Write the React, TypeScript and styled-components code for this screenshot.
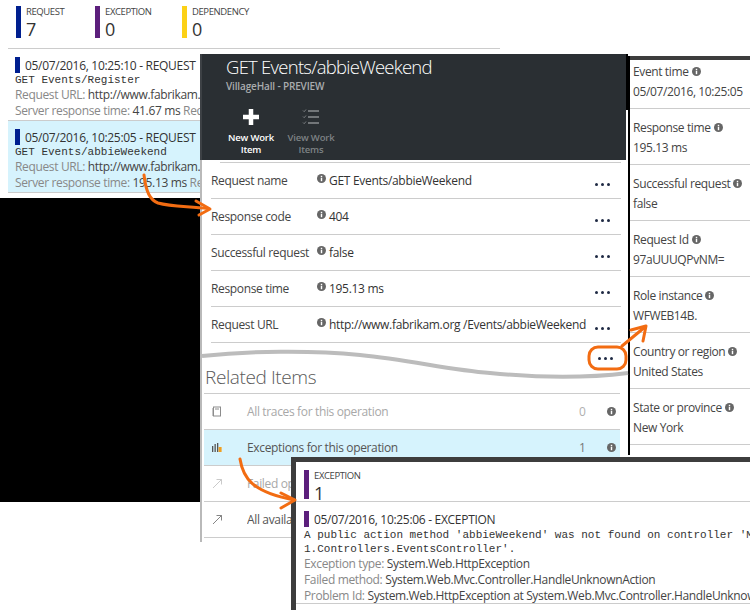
import React from "react";
import styled, { createGlobalStyle } from "styled-components";

const Global = createGlobalStyle`
  html, body { margin: 0; padding: 0; background: #fff; }
  body { font-family: "Open Sans", "Noto Sans", sans-serif; color: #333; }
  #root { width: 750px; height: 610px; overflow: hidden; }
`;

const Canvas = styled.div`
  position: relative;
  width: 750px;
  height: 610px;
  overflow: hidden;
  background: #fff;
  font-size: 12px;
  letter-spacing: -0.35px;
`;

const BlackBlock = styled.div`
  position: absolute;
  left: 0;
  top: 198px;
  width: 202px;
  height: 304px;
  background: #000;
`;

const ListWindow = styled.section`
  position: absolute;
  left: 0;
  top: 0;
  width: 500px;
  height: 198px;
  padding-left: 8px;
  box-sizing: border-box;
  background: #fff;
`;

const Tiles = styled.div`
  display: flex;
  height: 49px;
  padding: 6px 0 0 8px;
  box-sizing: border-box;
  border-bottom: 1px solid #ccc;
`;

const Tile = styled.div<{ $w: number }>`
  display: flex;
  width: ${(p) => p.$w}px;
  gap: 5px;
`;

const TileBar = styled.div<{ $c: string; $h?: number }>`
  width: 5px;
  height: ${(p) => p.$h ?? 32}px;
  background: ${(p) => p.$c};
`;

const TileText = styled.div`
  display: flex;
  flex-direction: column;
`;

const TileLabel = styled.div`
  font-size: 9.5px;
  line-height: 12px;
  letter-spacing: -0.4px;
  color: #444;
`;

const TileValue = styled.div`
  font-size: 18px;
  line-height: 22px;
  letter-spacing: 0;
  color: #333;
`;

const ResultRow = styled.div<{ $selected?: boolean }>`
  width: 192px;
  height: 72px;
  padding: 8px 0 0 7px;
  box-sizing: border-box;
  overflow: hidden;
  background: ${(p) => (p.$selected ? "#d6f3fd" : "#fff")};
  border-bottom: 1px solid #ccc;
`;

const ResultTitle = styled.div`
  display: flex;
  align-items: center;
  gap: 5px;
  height: 16px;
  font-size: 12px;
  letter-spacing: -0.3px;
  white-space: nowrap;
  color: #333;
`;

const Bar = styled.div<{ $c: string }>`
  flex: none;
  width: 5px;
  height: 16px;
  background: ${(p) => p.$c};
`;

const Mono = styled.div`
  font-family: "Liberation Mono", "DejaVu Sans Mono", monospace;
  font-size: 11px;
  line-height: 14px;
  letter-spacing: 0;
  white-space: nowrap;
  color: #333;
`;

const ExMono = styled(Mono)`
  position: relative;
  top: 1px;
`;

const MetaLine = styled.div`
  height: 16px;
  line-height: 16px;
  font-size: 12px;
  white-space: nowrap;
  color: #888;
  & b {
    font-weight: 400;
    color: #444;
  }
`;

const DetailWindow = styled.section`
  position: absolute;
  left: 200px;
  top: 54px;
  width: 426px;
  height: 488px;
  background: #fff;
`;

const DarkHeader = styled.header`
  height: 106px;
  box-sizing: border-box;
  background: #2a2f33;
  border-left: 2px solid #3d4145;
  padding-left: 24px;
  color: #fff;
`;

const HeaderTitle = styled.div`
  font-size: 18.5px;
  line-height: 26px;
  font-weight: 300;
  letter-spacing: -0.75px;
  white-space: nowrap;
`;

const HeaderSub = styled.div`
  font-size: 10px;
  line-height: 13px;
  font-weight: 600;
  letter-spacing: -0.15px;
  color: #a9acae;
`;

const Commands = styled.div`
  display: flex;
  margin-left: -5px;
  padding-top: 15px;
`;

const Command = styled.div<{ $off?: boolean }>`
  display: flex;
  flex-direction: column;
  align-items: center;
  width: 60px;
  font-size: 9.5px;
  line-height: 12px;
  font-weight: 600;
  letter-spacing: -0.2px;
  text-align: center;
  color: ${(p) => (p.$off ? "#7e8285" : "#fff")};
`;

const CommandIcon = styled.div`
  height: 24px;
`;

const DetailBody = styled.div`
  height: 382px;
  border-left: 2px solid #b9b9b9;
  padding: 2px 0 0 9px;
  box-sizing: border-box;
  display: flex;
  flex-direction: column;
`;

const PropRow = styled.div`
  flex: none;
  display: flex;
  align-items: center;
  height: 36px;
  width: 410px;
  box-sizing: border-box;
  border-bottom: 1px solid #ccc;
  font-size: 12px;
  color: #444;
`;

const PropTop = styled.div`
  flex: none;
  height: 0;
  margin-left: 9px;
  width: 401px;
  border-top: 1px solid #ccc;
`;

const PropName = styled.div`
  width: 106px;
  white-space: nowrap;
`;

const PropInfo = styled.div`
  display: flex;
  margin-top: -5px;
`;

const PropValue = styled.div`
  flex: 1;
  margin-left: 3px;
  white-space: nowrap;
  letter-spacing: -0.3px;
  color: #333;
`;

const Dots = styled.div`
  display: flex;
  gap: 3px;
  margin: 8px 11px 0 0;
`;

const Dot = styled.span`
  width: 3px;
  height: 3px;
  border-radius: 50%;
  background: #1f2a44;
`;

const Gap = styled.div`
  flex: none;
  height: 22px;
`;

const RelatedHeading = styled.div`
  flex: none;
  height: 19px;
  margin-left: -6px;
  font-size: 19px;
  line-height: 24px;
  font-weight: 300;
  letter-spacing: -0.4px;
  color: #5a5a5a;
  white-space: nowrap;
`;

const RelatedList = styled.div`
  flex: none;
  margin: 9px 0 0 -7px;
  width: 416px;
  border-top: 1px solid #ccc;
`;

const RelatedRow = styled.div<{ $selected?: boolean; $muted?: boolean }>`
  display: flex;
  align-items: center;
  height: 36px;
  box-sizing: border-box;
  border-bottom: 1px solid #ccc;
  background: ${(p) => (p.$selected ? "#d6f3fd" : "#fff")};
  color: ${(p) => (p.$muted ? "#a8a8a8" : "#555")};
  font-size: 12px;
`;

const RelatedIcon = styled.div`
  width: 43px;
  padding-left: 8px;
  box-sizing: border-box;
  display: flex;
`;

const RelatedName = styled.div`
  flex: 1;
  white-space: nowrap;
`;

const ClippedName = styled.div`
  width: 44px;
  overflow: hidden;
  white-space: nowrap;
`;

const Count = styled.div<{ $muted?: boolean }>`
  width: 28px;
  color: ${(p) => (p.$muted ? "#b0b0b0" : "#777")};
`;

const EndInfo = styled.div`
  width: 13px;
  display: flex;
`;

const SideWindow = styled.aside`
  position: absolute;
  left: 628px;
  top: 56px;
  width: 122px;
  height: 399px;
  box-sizing: border-box;
  background: #fff;
  border-left: 2px solid #000;
  &::before {
    content: "";
    position: absolute;
    left: -4px;
    top: -2px;
    width: 2px;
    height: 56px;
    background: #000;
  }
`;

const SideInner = styled.div`
  border-top: 4px solid #3d3d3d;
  height: 100%;
  box-sizing: border-box;
`;

const SideRow = styled.div`
  height: 56px;
  padding: 8px 0 0 3px;
  box-sizing: border-box;
  border-bottom: 1px solid #ccc;
  &:first-child {
    height: 49px;
    padding-top: 1px;
  }
`;

const SideLabel = styled.div`
  display: flex;
  align-items: center;
  gap: 3px;
  height: 21px;
  font-size: 12px;
  letter-spacing: -0.38px;
  color: #444;
  white-space: nowrap;
`;

const SideValue = styled.div`
  height: 20px;
  line-height: 20px;
  font-size: 12px;
  letter-spacing: -0.38px;
  color: #444;
  white-space: nowrap;
`;

const ExceptionWindow = styled.section`
  position: absolute;
  left: 291px;
  top: 457px;
  width: 459px;
  height: 153px;
  box-sizing: border-box;
  background: #fff;
  border-left: 5px solid #3d3d3d;
  border-top: 5px solid #3d3d3d;
  overflow: hidden;
`;

const ExTile = styled.div`
  display: flex;
  gap: 5px;
  height: 40px;
  padding: 8px 0 0 8px;
  box-sizing: border-box;
  border-bottom: 1px solid #ccc;
`;

const ExBody = styled.div`
  padding: 9px 0 0 8px;
  height: 102px;
  box-sizing: border-box;
  border-bottom: 1px solid #ccc;
`;

const ExMeta = styled(MetaLine)`
  position: relative;
  top: 1px;
`;

const Overlay = styled.svg`
  position: absolute;
  left: 0;
  top: 0;
  pointer-events: none;
`;

const Info = ({ c = "#666", s = 9 }: { c?: string; s?: number }) => (
  <svg width={s} height={s} viewBox="0 0 10 10" style={{ flex: "none" }}>
    <circle cx="5" cy="5" r="5" fill={c} />
    <rect x="4.2" y="4.2" width="1.6" height="3.8" fill="#fff" />
    <rect x="4.2" y="2" width="1.6" height="1.5" fill="#fff" />
  </svg>
);

const PlusIcon = () => (
  <svg width="18" height="18" viewBox="0 0 18 18">
    <path d="M9 1v16M1 9h16" stroke="#fff" strokeWidth="4.5" />
  </svg>
);

const ChecklistIcon = () => (
  <svg width="18" height="18" viewBox="0 0 18 18" fill="none" stroke="#8a8e91">
    <path d="M6 3h11M6 9h11M6 15h11" strokeWidth="1.6" />
    <path d="M1 2.5l1.2 1.2L4 1.5M1 8.5l1.2 1.2L4 7.5M1 14.5l1.2 1.2L4 13.5" strokeWidth="0.8" />
  </svg>
);

const TraceIcon = () => (
  <svg width="10" height="11" viewBox="0 0 10 11" fill="none" stroke="#8c8c8c" strokeWidth="1">
    <rect x="1.5" y="1" width="7" height="9" />
    <path d="M3 3h4M0 3h1M0 5h1M0 7h1M0 9h1" />
  </svg>
);

const BarsIcon = () => (
  <svg width="10" height="9" viewBox="0 0 10 9">
    <rect x="0" y="3" width="1.3" height="6" fill="#555" />
    <rect x="2.5" y="1" width="1.3" height="8" fill="#555" />
    <rect x="5" y="0" width="1.3" height="9" fill="#555" />
    <rect x="6.6" y="4" width="3" height="5" fill="#f0a020" />
  </svg>
);

const ArrowIcon = ({ c }: { c: string }) => (
  <svg width="11" height="11" viewBox="0 0 11 11" fill="none" stroke={c} strokeWidth="0.9">
    <path d="M1 10L9.5 1.5M4.5 1.5h5v5" />
  </svg>
);

const DotsRow = () => (
  <Dots>
    <Dot />
    <Dot />
    <Dot />
  </Dots>
);

const props = [
  ["Request name", "GET Events/abbieWeekend"],
  ["Response code", "404"],
  ["Successful request", "false"],
  ["Response time", "195.13 ms"],
  ["Request URL", "http://www.fabrikam.org /Events/abbieWeekend"],
];

const side = [
  ["Event time", "05/07/2016, 10:25:05"],
  ["Response time", "195.13 ms"],
  ["Successful request", "false"],
  ["Request Id", "97aUUUQPvNM="],
  ["Role instance", "WFWEB14B."],
  ["Country or region", "United States"],
  ["State or province", "New York"],
];

export default function App() {
  return (
    <Canvas>
      <Global />
      <BlackBlock />
      <ListWindow>
        <Tiles>
          <Tile $w={79}>
            <TileBar $c="#001f8f" />
            <TileText>
              <TileLabel>REQUEST</TileLabel>
              <TileValue>7</TileValue>
            </TileText>
          </Tile>
          <Tile $w={87}>
            <TileBar $c="#5c1f7c" />
            <TileText>
              <TileLabel>EXCEPTION</TileLabel>
              <TileValue>0</TileValue>
            </TileText>
          </Tile>
          <Tile $w={100}>
            <TileBar $c="#fcd116" />
            <TileText>
              <TileLabel>DEPENDENCY</TileLabel>
              <TileValue>0</TileValue>
            </TileText>
          </Tile>
        </Tiles>
        <ResultRow>
          <ResultTitle>
            <Bar $c="#001f8f" />
            05/07/2016, 10:25:10 - REQUEST
          </ResultTitle>
          <Mono>GET Events/Register</Mono>
          <MetaLine>
            Request URL: <b>http://www.fabrikam.org/Events/Register</b>
          </MetaLine>
          <MetaLine>
            Server response time: <b>41.67 ms</b> Request size
          </MetaLine>
        </ResultRow>
        <ResultRow $selected>
          <ResultTitle>
            <Bar $c="#001f8f" />
            05/07/2016, 10:25:05 - REQUEST
          </ResultTitle>
          <Mono>GET Events/abbieWeekend</Mono>
          <MetaLine>
            Request URL: <b>http://www.fabrikam.org/Events/abbieWeekend</b>
          </MetaLine>
          <MetaLine>
            Server response time: <b>195.13 ms</b> Request size
          </MetaLine>
        </ResultRow>
      </ListWindow>

      <DetailWindow>
        <DarkHeader>
          <HeaderTitle>GET Events/abbieWeekend</HeaderTitle>
          <HeaderSub>VillageHall - PREVIEW</HeaderSub>
          <Commands>
            <Command>
              <CommandIcon>
                <PlusIcon />
              </CommandIcon>
              <span>
                New Work
                <br />
                Item
              </span>
            </Command>
            <Command $off>
              <CommandIcon>
                <ChecklistIcon />
              </CommandIcon>
              <span>
                View Work
                <br />
                Items
              </span>
            </Command>
          </Commands>
        </DarkHeader>
        <DetailBody>
          <PropTop />
          {props.map(([name, value]) => (
            <PropRow key={name}>
              <PropName>{name}</PropName>
              <PropInfo>
                <Info />
              </PropInfo>
              <PropValue>{value}</PropValue>
              <DotsRow />
            </PropRow>
          ))}
          <Gap />
          <RelatedHeading>Related Items</RelatedHeading>
          <RelatedList>
            <RelatedRow $muted>
              <RelatedIcon>
                <TraceIcon />
              </RelatedIcon>
              <RelatedName>All traces for this operation</RelatedName>
              <Count $muted>0</Count>
              <EndInfo>
                <Info />
              </EndInfo>
            </RelatedRow>
            <RelatedRow $selected>
              <RelatedIcon>
                <BarsIcon />
              </RelatedIcon>
              <RelatedName>Exceptions for this operation</RelatedName>
              <Count>1</Count>
              <EndInfo>
                <Info />
              </EndInfo>
            </RelatedRow>
            <RelatedRow $muted>
              <RelatedIcon>
                <ArrowIcon c="#c4c4c4" />
              </RelatedIcon>
              <ClippedName>Failed operations</ClippedName>
            </RelatedRow>
            <RelatedRow>
              <RelatedIcon>
                <ArrowIcon c="#777" />
              </RelatedIcon>
              <ClippedName>All available telemetry</ClippedName>
            </RelatedRow>
          </RelatedList>
        </DetailBody>
      </DetailWindow>

      <SideWindow>
        <SideInner>
          {side.map(([name, value]) => (
            <SideRow key={name}>
              <SideLabel>
                {name}
                <Info />
              </SideLabel>
              <SideValue>{value}</SideValue>
            </SideRow>
          ))}
        </SideInner>
      </SideWindow>

      <ExceptionWindow>
        <ExTile>
          <TileBar $c="#5c1f7c" $h={29} />
          <TileText>
            <TileLabel>EXCEPTION</TileLabel>
            <TileValue>1</TileValue>
          </TileText>
        </ExTile>
        <ExBody>
          <ResultTitle>
            <Bar $c="#5c1f7c" />
            05/07/2016, 10:25:06 - EXCEPTION
          </ResultTitle>
          <ExMono>A public action method 'abbieWeekend' was not found on controller 'Microsoft.Fabrika</ExMono>
          <ExMono>1.Controllers.EventsController'.</ExMono>
          <ExMeta>
            Exception type: <b>System.Web.HttpException</b>
          </ExMeta>
          <ExMeta>
            Failed method: <b>System.Web.Mvc.Controller.HandleUnknownAction</b>
          </ExMeta>
          <ExMeta>
            Problem Id: <b>System.Web.HttpException at System.Web.Mvc.Controller.HandleUnknownAction</b>
          </ExMeta>
        </ExBody>
      </ExceptionWindow>

      <Overlay width="750" height="610" viewBox="0 0 750 610" fill="none">
        <path
          d="M202 356C250 351 310 350 360 355C410 360 450 370 490 373C530 377 580 379 628 373"
          stroke="#bcbcbc"
          strokeWidth="4"
        />
        <g stroke="#f26c12" strokeWidth="3" strokeLinecap="round" strokeLinejoin="round">
          <path d="M144 175C146 192 150 200 158 203C172 207 190 206 208 208.5" />
          <path d="M196 201L210 209L199 215" />
          <rect x="589" y="347" width="37" height="22" rx="9" />
          <path d="M622 346L645 327" />
          <path d="M631 330L646 326L643 341" />
          <path d="M240 459C243 478 252 492 294 500" />
          <path d="M281 493L295 500L281 508" />
        </g>
        <g fill="#1f2a44">
          <circle cx="599.5" cy="358.5" r="1.5" />
          <circle cx="605.5" cy="358.5" r="1.5" />
          <circle cx="611.5" cy="358.5" r="1.5" />
        </g>
      </Overlay>
    </Canvas>
  );
}
